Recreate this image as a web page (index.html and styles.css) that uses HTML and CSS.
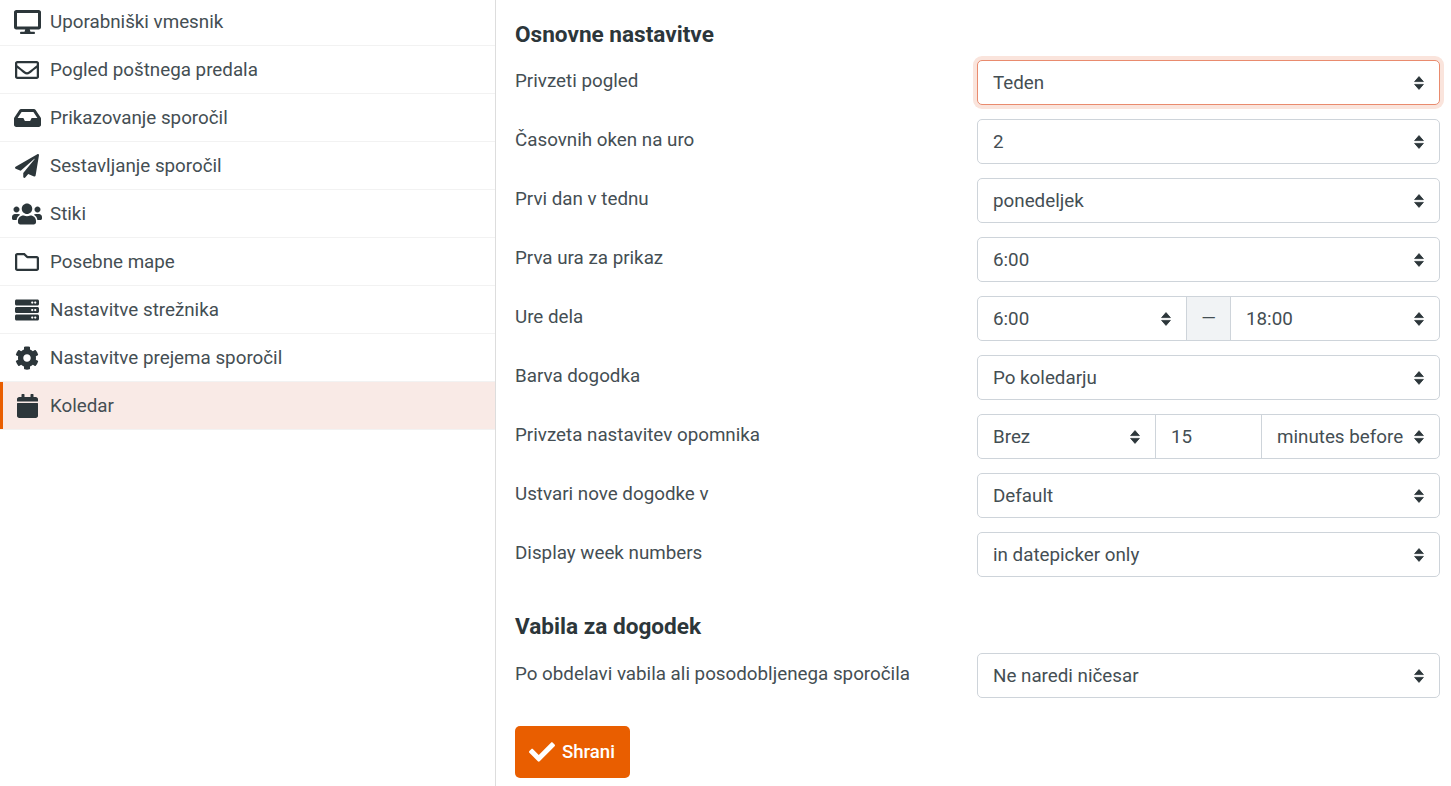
FILE: index.html
```html
<!DOCTYPE html>
<html lang="sl">
<head>
<meta charset="utf-8">
<title>Nastavitve – Koledar</title>
<link rel="stylesheet" href="styles.css">
</head>
<body>
<nav class="sidebar">
  <ul class="sections">
    <li class="section"><span class="ico"><svg viewBox="0 0 576 512"><path d="M528 0H48C21.5 0 0 21.5 0 48v320c0 26.5 21.5 48 48 48h192l-16 48h-72c-13.3 0-24 10.7-24 24s10.7 24 24 24h272c13.3 0 24-10.7 24-24s-10.7-24-24-24h-72l-16-48h192c26.5 0 48-21.5 48-48V48c0-26.5-21.5-48-48-48zm-16 352H64V64h448v288z"/></svg></span><span class="name">Uporabniški vmesnik</span></li>
    <li class="section"><span class="ico"><svg viewBox="0 0 512 512"><path d="M464 64H48C21.49 64 0 85.49 0 112v288c0 26.51 21.49 48 48 48h416c26.51 0 48-21.49 48-48V112c0-26.51-21.49-48-48-48zm0 48v40.805c-22.422 18.259-58.168 46.651-134.587 106.49-16.841 13.247-50.201 45.072-73.413 44.701-23.208.375-56.579-31.459-73.413-44.701C106.18 199.465 70.425 171.067 48 152.805V112h416zM48 400V214.398c22.914 18.251 55.409 43.862 104.938 82.646 21.857 17.205 60.134 55.186 103.062 54.955 42.717.231 80.509-37.199 103.053-54.947 49.528-38.783 82.032-64.401 104.947-82.653V400H48z"/></svg></span><span class="name">Pogled poštnega predala</span></li>
    <li class="section"><span class="ico"><svg viewBox="0 0 576 512"><path d="M567.938 243.908L462.25 85.374A48.003 48.003 0 0 0 422.311 64H153.689a48 48 0 0 0-39.938 21.374L8.062 243.908A47.994 47.994 0 0 0 0 270.533V400c0 26.51 21.49 48 48 48h480c26.51 0 48-21.49 48-48V270.533a47.994 47.994 0 0 0-8.062-26.625zM162.252 128h251.497l85.333 128H376l-32 64H232l-32-64H76.918l85.334-128z"/></svg></span><span class="name">Prikazovanje sporočil</span></li>
    <li class="section"><span class="ico"><svg viewBox="0 0 512 512"><path d="M476 3.2L12.5 270.6c-18.1 10.4-15.8 35.6 2.2 43.2L121 358.4l287.3-253.2c5.5-4.9 13.3 2.6 8.6 8.3L176 407v80.5c0 23.6 28.5 32.9 42.5 15.8L282 426l124.6 52.2c14.2 6 30.4-2.9 33-18.2l72-432C515 7.8 493.3-6.8 476 3.2z"/></svg></span><span class="name">Sestavljanje sporočil</span></li>
    <li class="section"><span class="ico"><svg viewBox="0 0 640 512"><path d="M96 224c35.3 0 64-28.7 64-64s-28.7-64-64-64-64 28.7-64 64 28.7 64 64 64zm448 0c35.3 0 64-28.7 64-64s-28.7-64-64-64-64 28.7-64 64 28.7 64 64 64zm32 32h-64c-17.6 0-33.5 7.1-45.1 18.6 40.3 22.1 68.9 62 75.1 109.4h66c17.7 0 32-14.3 32-32v-32c0-35.3-28.7-64-64-64zm-256 0c61.9 0 112-50.1 112-112S381.9 32 320 32 208 82.1 208 144s50.1 112 112 112zm76.8 32h-8.3c-20.8 10-43.9 16-68.5 16s-47.6-6-68.5-16h-8.3C179.6 288 128 339.6 128 403.2V432c0 26.5 21.5 48 48 48h288c26.5 0 48-21.5 48-48v-28.8c0-63.6-51.6-115.2-115.2-115.2zm-223.7-13.4C161.5 263.1 145.6 256 128 256H64c-35.3 0-64 28.7-64 64v32c0 17.7 14.3 32 32 32h65.9c6.3-47.4 34.9-87.3 75.2-109.4z"/></svg></span><span class="name">Stiki</span></li>
    <li class="section"><span class="ico"><svg viewBox="0 0 512 512"><path d="M464 128H272l-54.63-54.63c-6-6-14.14-9.37-22.63-9.37H48C21.49 64 0 85.49 0 112v288c0 26.51 21.49 48 48 48h416c26.51 0 48-21.49 48-48V176c0-26.51-21.49-48-48-48zm0 272H48V112h140.12l54.63 54.63c6 6 14.14 9.37 22.63 9.37H464v224z"/></svg></span><span class="name">Posebne mape</span></li>
    <li class="section"><span class="ico"><svg viewBox="0 0 512 512"><path d="M480 160H32c-17.673 0-32-14.327-32-32V64c0-17.673 14.327-32 32-32h448c17.673 0 32 14.327 32 32v64c0 17.673-14.327 32-32 32zm-48-88c-13.255 0-24 10.745-24 24s10.745 24 24 24 24-10.745 24-24-10.745-24-24-24zm-64 0c-13.255 0-24 10.745-24 24s10.745 24 24 24 24-10.745 24-24-10.745-24-24-24zm112 248H32c-17.673 0-32-14.327-32-32v-64c0-17.673 14.327-32 32-32h448c17.673 0 32 14.327 32 32v64c0 17.673-14.327 32-32 32zm-48-88c-13.255 0-24 10.745-24 24s10.745 24 24 24 24-10.745 24-24-10.745-24-24-24zm-64 0c-13.255 0-24 10.745-24 24s10.745 24 24 24 24-10.745 24-24-10.745-24-24-24zm112 248H32c-17.673 0-32-14.327-32-32v-64c0-17.673 14.327-32 32-32h448c17.673 0 32 14.327 32 32v64c0 17.673-14.327 32-32 32zm-48-88c-13.255 0-24 10.745-24 24s10.745 24 24 24 24-10.745 24-24-10.745-24-24-24zm-64 0c-13.255 0-24 10.745-24 24s10.745 24 24 24 24-10.745 24-24-10.745-24-24-24z"/></svg></span><span class="name">Nastavitve strežnika</span></li>
    <li class="section"><span class="ico"><svg viewBox="0 0 512 512"><path d="M487.4 315.7l-42.6-24.6c4.3-23.2 4.3-47 0-70.2l42.6-24.6c4.9-2.8 7.1-8.6 5.5-14-11.1-35.6-30-67.8-54.7-94.6-3.8-4.1-10-5.1-14.8-2.3L380.8 110c-17.9-15.4-38.5-27.3-60.8-35.1V25.8c0-5.6-3.9-10.5-9.4-11.7-36.7-8.2-74.3-7.8-109.2 0-5.5 1.2-9.4 6.1-9.4 11.7V75c-22.2 7.9-42.8 19.8-60.8 35.1L88.7 85.5c-4.9-2.8-11-1.9-14.8 2.3-24.7 26.7-43.6 58.9-54.7 94.6-1.7 5.4.6 11.2 5.5 14L67.3 221c-4.3 23.2-4.3 47 0 70.2l-42.6 24.6c-4.9 2.8-7.1 8.6-5.5 14 11.1 35.6 30 67.8 54.7 94.6 3.8 4.1 10 5.1 14.8 2.3l42.6-24.6c17.9 15.4 38.5 27.3 60.8 35.1v49.2c0 5.6 3.9 10.5 9.4 11.7 36.7 8.2 74.3 7.8 109.2 0 5.5-1.2 9.4-6.1 9.4-11.7v-49.2c22.2-7.9 42.8-19.8 60.8-35.1l42.6 24.6c4.9 2.8 11 1.9 14.8-2.3 24.7-26.7 43.6-58.9 54.7-94.6 1.5-5.5-.7-11.3-5.6-14.1zM256 336c-44.1 0-80-35.9-80-80s35.9-80 80-80 80 35.9 80 80-35.9 80-80 80z"/></svg></span><span class="name">Nastavitve prejema sporočil</span></li>
    <li class="section active"><span class="ico"><svg viewBox="0 0 448 512"><path d="M12 192h424c6.6 0 12 5.4 12 12v260c0 26.5-21.5 48-48 48H48c-26.5 0-48-21.5-48-48V204c0-6.6 5.4-12 12-12zm436-44v-36c0-26.5-21.5-48-48-48h-48V12c0-6.6-5.4-12-12-12h-40c-6.6 0-12 5.4-12 12v52H160V12c0-6.6-5.4-12-12-12h-40c-6.6 0-12 5.4-12 12v52H48C21.5 64 0 85.5 0 112v36c0 6.6 5.4 12 12 12h424c6.6 0 12-5.4 12-12z"/></svg></span><span class="name">Koledar</span></li>
  </ul>
</nav>
<main class="content">
  <form class="prefs">
    <h2 class="legend">Osnovne nastavitve</h2>
    <div class="row"><label class="lbl">Privzeti pogled</label><div class="ctl"><select class="sel focus"><option>Teden</option></select></div></div>
    <div class="row"><label class="lbl">Časovnih oken na uro</label><div class="ctl"><select class="sel"><option>2</option></select></div></div>
    <div class="row"><label class="lbl">Prvi dan v tednu</label><div class="ctl"><select class="sel"><option>ponedeljek</option></select></div></div>
    <div class="row"><label class="lbl">Prva ura za prikaz</label><div class="ctl"><select class="sel"><option>6:00</option></select></div></div>
    <div class="row"><label class="lbl">Ure dela</label><div class="ctl group">
      <select class="sel half"><option>6:00</option></select><span class="addon">—</span><select class="sel half"><option>18:00</option></select>
    </div></div>
    <div class="row"><label class="lbl">Barva dogodka</label><div class="ctl"><select class="sel"><option>Po koledarju</option></select></div></div>
    <div class="row"><label class="lbl">Privzeta nastavitev opomnika</label><div class="ctl group">
      <select class="sel third"><option>Brez</option></select><input class="num" type="text" value="15"><select class="sel third"><option>minutes before</option></select>
    </div></div>
    <div class="row"><label class="lbl">Ustvari nove dogodke v</label><div class="ctl"><select class="sel"><option>Default</option></select></div></div>
    <div class="row"><label class="lbl">Display week numbers</label><div class="ctl"><select class="sel"><option>in datepicker only</option></select></div></div>
    <h2 class="legend second">Vabila za dogodek</h2>
    <div class="row"><label class="lbl">Po obdelavi vabila ali posodobljenega sporočila</label><div class="ctl"><select class="sel"><option>Ne naredi ničesar</option></select></div></div>
    <button class="save" type="button"><svg class="check" viewBox="0 0 512 512"><path d="M173.898 439.404l-166.4-166.4c-9.997-9.997-9.997-26.206 0-36.204l36.203-36.204c9.997-9.998 26.207-9.997 36.204 0L192 312.69 432.095 72.596c9.997-9.997 26.207-9.997 36.204 0l36.203 36.204c9.997 9.997 9.997 26.206 0 36.204l-294.4 294.401c-9.998 9.997-26.207 9.997-36.204-.001z"/></svg>Shrani</button>
  </form>
</main>
</body>
</html>
```
FILE: styles.css
```css
* { box-sizing: border-box; }
html, body { height: 100%; }
body {
  margin: 0;
  display: flex;
  overflow: hidden;
  background: #fff;
  color: #444e53;
  font: 18.8px/26.4px Roboto, "Liberation Sans", sans-serif;
}
.sidebar {
  flex: 0 0 496px;
  border-right: 1px solid #ddd;
}
.sections {
  list-style: none;
  margin: -2px 0 0;
  padding: 0;
}
.section {
  display: flex;
  align-items: center;
  gap: 8px;
  height: 48px;
  padding-left: 12px;
  border-bottom: 1px solid #f2f2f2;
}
.section.active {
  background: #f9eae6;
  box-shadow: inset 3px 0 0 #e95e00;
}
.ico {
  flex: 0 0 30px;
  display: flex;
  justify-content: center;
}
.ico svg {
  display: block;
  height: 24px;
  fill: #2c363a;
}
.name {
  padding-top: 2px;
}
.content {
  flex: 1;
  padding: 19px 11px 0 19px;
  min-width: 0;
}
.legend {
  margin: 0 0 9px;
  font-size: 22.6px;
  line-height: 32px;
  font-weight: 700;
  color: #2c363a;
}
.legend.second {
  margin: 34px 0 10px;
}
.row {
  display: flex;
  margin-bottom: 14px;
}
.lbl {
  flex: 0 0 462px;
  padding-top: 8px;
}
.ctl {
  flex: 1;
  min-width: 0;
}
.group {
  display: flex;
}
.sel, .num {
  height: 45px;
  margin: 0;
  padding: 1px 15px 0;
  border: 1px solid #ced4da;
  border-radius: 5px;
  background-color: #fff;
  color: inherit;
  font: inherit;
  outline: 0;
}
.sel {
  width: 100%;
  padding-right: 36px;
  appearance: none;
  -webkit-appearance: none;
  background-image: url("data:image/svg+xml,%3Csvg xmlns='http://www.w3.org/2000/svg' viewBox='0 0 10 14'%3E%3Cpath fill='%232c363a' stroke='%232c363a' stroke-width='.8' stroke-linejoin='round' d='M5 .6 9.4 5.6H.6zM.6 8.4h8.8L5 13.4z'/%3E%3C/svg%3E");
  background-repeat: no-repeat;
  background-position: right 15px center;
  background-size: 10px 14px;
}
.focus {
  border-color: #e98b6e;
  box-shadow: 0 0 0 4px #fae4dc;
}
.half {
  flex: 1 1 0;
  min-width: 0;
}
.half:first-child, .third:first-child {
  border-radius: 5px 0 0 5px;
}
.half:last-child, .third:last-child {
  border-radius: 0 5px 5px 0;
}
.third {
  flex: 0 0 179px;
  width: 179px;
}
.third:last-child {
  padding-right: 30px;
}
.addon {
  flex: 0 0 45px;
  margin: 0 -1px;
  position: relative;
  border: 1px solid #ced4da;
  background: #f1f3f5;
  text-align: center;
  line-height: 43px;
}
.num {
  flex: 1 1 0;
  min-width: 0;
  margin: 0 -1px;
  border-radius: 0;
  position: relative;
}
.save {
  display: flex;
  align-items: center;
  gap: 7px;
  height: 52px;
  margin-top: 28px;
  padding: 0 15px 1px 14px;
  border: 0;
  border-radius: 5px;
  background: #e95e00;
  color: #fff;
  font: 500 18.6px/26px Roboto, "Liberation Sans", sans-serif;
}
.check {
  width: 26px;
  height: 26px;
  fill: #fff;
}
```
